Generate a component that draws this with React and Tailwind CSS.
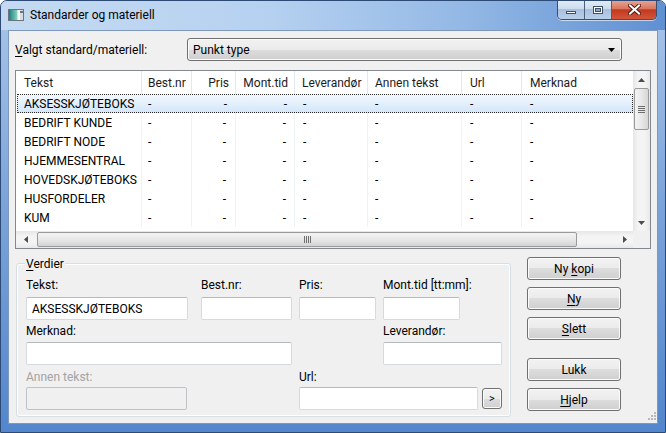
import React from "react";

const columns = [
  { label: "Tekst", cls: "w-[126px] pl-[8px]", val: "w-[126px] pl-[8px]" },
  { label: "Best.nr", cls: "w-[50px] pl-[6px]", val: "w-[50px] pl-[6px]" },
  { label: "Pris", cls: "w-[44px] justify-end pr-[6px]", val: "w-[44px] justify-end pr-[9px]" },
  { label: "Mont.tid", cls: "w-[59px] justify-end pr-[6px]", val: "w-[59px] justify-end pr-[8px]" },
  { label: "Leverandør", cls: "w-[73px] pl-[7px]", val: "w-[73px] pl-[8px]" },
  { label: "Annen tekst", cls: "w-[94px] pl-[7px]", val: "w-[94px] pl-[7px]" },
  { label: "Url", cls: "w-[60px] pl-[8px]", val: "w-[60px] pl-[8px]" },
  { label: "Merknad", cls: "w-[130px] pl-[8px]", val: "w-[130px] pl-[8px]" },
];

const rows = [
  "AKSESSKJØTEBOKS",
  "BEDRIFT KUNDE",
  "BEDRIFT NODE",
  "HJEMMESENTRAL",
  "HOVEDSKJØTEBOKS",
  "HUSFORDELER",
  "KUM",
];

function U({ children }) {
  return <span className="underline underline-offset-[2px]">{children}</span>;
}

function WinButton({ children, className = "" }) {
  return (
    <button
      className={`h-[23px] w-[94px] rounded-[3px] border border-[#707070] bg-[linear-gradient(#f2f2f2_0%,#ebebeb_50%,#dddddd_50%,#cfcfcf_100%)] shadow-[inset_0_0_0_1px_#fbfbfb] text-[12px] leading-none text-black flex items-center justify-center ${className}`}
    >
      {children}
    </button>
  );
}

function TextBox({ className = "", value = "", disabled = false }) {
  return (
    <div
      className={`h-[23px] rounded-[2px] border ${
        disabled
          ? "border-[#bfc3c8] bg-[#f0f0f0]"
          : "border-[#d5dae1] border-t-[#b5bac2] bg-white"
      } flex items-center pl-[5px] text-[12px] ${className}`}
    >
      {value}
    </div>
  );
}

function Field({ label, className = "", children, disabled = false }) {
  return (
    <div className={`flex flex-col ${className}`}>
      <div
        className={`h-[16px] leading-[16px] text-[12px] ${
          disabled ? "text-[#a3a3a3]" : "text-black"
        }`}
      >
        {label}
      </div>
      {children}
    </div>
  );
}

function TitleIcon() {
  return (
    <svg width="16" height="16" viewBox="0 0 16 16">
      <defs>
        <linearGradient id="ti" x1="0" y1="0" x2="1" y2="0">
          <stop offset="0" stopColor="#1f7f86" />
          <stop offset="1" stopColor="#7fd3b8" />
        </linearGradient>
      </defs>
      <rect x="0.5" y="2.5" width="15" height="11" fill="#d9dde2" stroke="#6b737c" />
      <rect x="1" y="3" width="8" height="10" fill="url(#ti)" />
      <rect x="10" y="3" width="2" height="10" fill="#f4f6f8" />
      <rect x="12" y="4" width="3" height="2" fill="#6b737c" />
    </svg>
  );
}

function CaptionButtons() {
  return (
    <div className="ml-auto mr-[8px] -mt-px flex h-[20px] overflow-hidden rounded-b-[5px] border border-t-0 border-[#3b4e6b] shadow-[0_1px_0_rgba(255,255,255,0.6)]">
      <div className="w-[27px] h-full bg-[linear-gradient(#e4edf7_0%,#cddcee_45%,#a9c0df_50%,#b9cfe9_100%)] border-r border-[#4b5f7c] flex items-end justify-center pb-[5px]">
        <div className="w-[10px] h-[3px] bg-white border border-[#3f4f66]" />
      </div>
      <div className="w-[27px] h-full bg-[linear-gradient(#e4edf7_0%,#cddcee_45%,#a9c0df_50%,#b9cfe9_100%)] border-r border-[#4b5f7c] flex items-center justify-center">
        <div className="w-[10px] h-[8px] border border-[#3f4f66] bg-white p-[1px]">
          <div className="w-full h-full bg-[#8fa7c8] border border-[#3f4f66]" />
        </div>
      </div>
      <div className="w-[44px] h-full bg-[linear-gradient(#eaa898_0%,#d8775f_45%,#c2391e_52%,#d2563a_100%)] flex items-center justify-center">
        <svg width="13" height="11" viewBox="0 0 13 11">
          <path d="M2 1.5 L11 9.5 M11 1.5 L2 9.5" stroke="#5a1a10" strokeWidth="4" strokeLinecap="square" />
          <path d="M2 1.5 L11 9.5 M11 1.5 L2 9.5" stroke="#ffffff" strokeWidth="2" strokeLinecap="square" />
        </svg>
      </div>
    </div>
  );
}

function Tri({ dir }) {
  const d = {
    up: "M0 4 L3.5 0 L7 4 Z",
    down: "M0 0 L7 0 L3.5 4 Z",
    left: "M4 0 L4 7 L0 3.5 Z",
    right: "M0 0 L4 3.5 L0 7 Z",
  }[dir];
  const horiz = dir === "left" || dir === "right";
  return (
    <svg width={horiz ? 4 : 7} height={horiz ? 7 : 4} viewBox={horiz ? "0 0 4 7" : "0 0 7 4"}>
      <path d={d} fill="#4d4d4d" />
    </svg>
  );
}

function ListView() {
  return (
    <div className="ml-[6px] mt-[9px] w-[636px] h-[179px] border border-[#828790] bg-white flex flex-col text-[12px]">
      <div className="flex h-[160px]">
        {/* list content */}
        <div className="w-[617px] h-full overflow-hidden">
          <div className="flex h-[23px] bg-white">
            {columns.map((c) => (
              <div
                key={c.label}
                className={`${c.cls} shrink-0 h-full flex items-center pt-[1px] border-r border-[#e3e8ee] text-[#1b1b1b] whitespace-nowrap`}
              >
                {c.label}
              </div>
            ))}
          </div>
          {rows.map((r, i) => (
            <div
              key={r}
              className={`flex h-[19px] w-[616px] ${
                i === 0
                  ? "bg-[linear-gradient(#f3f8fe,#d3e6fa)] outline-1 outline-dotted outline-[#2a2a2a] -outline-offset-1 ml-px"
                  : ""
              }`}
            >
              {columns.map((c, j) => (
                <div
                  key={c.label}
                  className={`${c.val} shrink-0 h-full flex items-center pt-[1px] whitespace-nowrap ${
                    i === 0 ? "" : "border-r border-[#eef3fa]"
                  } ${i === 0 && j === 0 ? "-ml-px" : ""}`}
                >
                  {j === 0 ? r : "-"}
                </div>
              ))}
            </div>
          ))}
        </div>
        {/* vertical scrollbar */}
        <div className="w-[17px] h-full bg-[linear-gradient(90deg,#e6e6e6,#f4f4f4_30%,#f4f4f4_70%,#e8e8e8)] flex flex-col items-center">
          <div className="h-[17px] w-full flex items-center justify-center">
            <Tri dir="up" />
          </div>
          <div className="w-[15px] h-[42px] rounded-[2px] border border-[#9a9a9a] bg-[linear-gradient(90deg,#f3f3f3,#e8e8e8_50%,#d6d6d6)] flex flex-col items-center justify-center gap-[1px]">
            <div className="w-[7px] h-[1px] bg-[#6e6e6e]" />
            <div className="w-[7px] h-[1px] bg-[#6e6e6e]" />
            <div className="w-[7px] h-[1px] bg-[#6e6e6e]" />
            <div className="w-[7px] h-[1px] bg-[#6e6e6e]" />
          </div>
          <div className="flex-1" />
          <div className="h-[17px] w-full flex items-center justify-center">
            <Tri dir="down" />
          </div>
        </div>
      </div>
      {/* horizontal scrollbar */}
      <div className="flex h-[17px]">
        <div className="w-[617px] h-full bg-[linear-gradient(#e6e6e6,#f4f4f4_30%,#f4f4f4_70%,#e8e8e8)] flex items-center">
          <div className="w-[20px] h-full flex items-center justify-center">
            <Tri dir="left" />
          </div>
          <div className="ml-[1px] w-[540px] h-[15px] rounded-[2px] border border-[#9a9a9a] bg-[linear-gradient(#f3f3f3,#e8e8e8_50%,#d3d3d3)] flex items-center justify-center gap-[1px]">
            <div className="w-[1px] h-[7px] bg-[#6e6e6e]" />
            <div className="w-[1px] h-[7px] bg-[#6e6e6e]" />
            <div className="w-[1px] h-[7px] bg-[#6e6e6e]" />
            <div className="w-[1px] h-[7px] bg-[#6e6e6e]" />
          </div>
          <div className="flex-1" />
          <div className="w-[17px] h-full flex items-center justify-center">
            <Tri dir="right" />
          </div>
        </div>
        <div className="w-[17px] h-full bg-[#f0f0f0]" />
      </div>
    </div>
  );
}

export default function App() {
  return (
    <div className="w-[666px] h-[433px] overflow-hidden rounded-t-[7px] border border-[#2d4a75] bg-[linear-gradient(180deg,#a9c6ea_0%,#7ea5da_45%,#5386cc_100%)] flex flex-col [font-family:Roboto,'Noto_Sans',sans-serif] text-black">
      {/* Title bar */}
      <div className="h-[29px] shrink-0 flex items-start bg-[linear-gradient(90deg,#c4daf2_0%,#b6d1f0_40%,#93b8e5_70%,#5f90d2_100%)]">
        <div className="ml-[7px] mt-[6px]">
          <TitleIcon />
        </div>
        <div className="ml-[6px] mt-[6px] text-[12px] leading-[16px] text-black">
          Standarder og materiell
        </div>
        <CaptionButtons />
      </div>

      {/* Client area */}
      <div className="relative mx-[7px] mb-[8px] flex-1 border border-[#7d97bd] bg-[#f0f0f0] flex flex-col">
        {/* Selector row */}
        <div className="flex items-center pt-[7px]">
          <div className="w-[178px] pl-[6px] text-[12px]">
            <U>V</U>algt standard/materiell:
          </div>
          <div className="w-[435px] h-[23px] rounded-[3px] border border-[#707070] bg-[linear-gradient(#f2f2f2_0%,#ebebeb_50%,#dddddd_50%,#cfcfcf_100%)] shadow-[inset_0_0_0_1px_#fbfbfb] flex items-center pl-[5px] pr-[6px] text-[12px]">
            <span className="flex-1">Punkt type</span>
            <svg width="7" height="4" viewBox="0 0 7 4">
              <path d="M0 0 L7 0 L3.5 4 Z" fill="#000" />
            </svg>
          </div>
        </div>

        <ListView />

        {/* Bottom section */}
        <div className="flex mt-[8px]">
          <div className="relative ml-[7px] mt-[6px] w-[495px] h-[154px] rounded-[3px] border border-[#d5dfe5] shadow-[inset_0_0_0_1px_#ffffff] pl-[9px] pt-[13px]">
            <div className="absolute left-[8px] -top-[8px] px-px bg-[#f0f0f0] text-[12px] leading-[16px]">
              <U>V</U>erdier
            </div>
            <div className="flex">
              <Field label="Tekst:" className="w-[162px]">
                <TextBox value="AKSESSKJØTEBOKS" className="mt-[4px]" />
              </Field>
              <Field label="Best.nr:" className="ml-[13px] w-[91px]">
                <TextBox className="mt-[4px]" />
              </Field>
              <Field label="Pris:" className="ml-[7px] w-[77px]">
                <TextBox className="mt-[4px]" />
              </Field>
              <Field label="Mont.tid [tt:mm]:" className="ml-[7px] w-[77px] whitespace-nowrap">
                <TextBox className="mt-[4px]" />
              </Field>
            </div>
            <div className="flex mt-[3px]">
              <Field label="Merknad:" className="w-[266px]">
                <TextBox className="mt-[3px]" />
              </Field>
              <Field label="Leverandør:" className="ml-[91px] w-[119px]">
                <TextBox className="mt-[3px]" />
              </Field>
            </div>
            <div className="flex mt-[4px]">
              <Field label="Annen tekst:" className="w-[161px]" disabled>
                <TextBox className="mt-[2px]" disabled />
              </Field>
              <Field label="Url:" className="ml-[112px] w-[203px]">
                <div className="mt-[2px] flex items-center">
                  <TextBox className="w-[179px]" />
                  <button className="ml-[4px] w-[20px] h-[21px] rounded-[3px] border border-[#707070] bg-[linear-gradient(#f2f2f2_0%,#ebebeb_50%,#dddddd_50%,#cfcfcf_100%)] shadow-[inset_0_0_0_1px_#fbfbfb] text-[11px] leading-none flex items-center justify-center">
                    &gt;
                  </button>
                </div>
              </Field>
            </div>
          </div>

          <div className="ml-[16px] flex flex-col">
            <WinButton>
              Ny&nbsp;<U>k</U>opi
            </WinButton>
            <WinButton className="mt-[7px]">
              <U>N</U>y
            </WinButton>
            <WinButton className="mt-[7px]">
              <U>S</U>lett
            </WinButton>
            <WinButton className="mt-[18px]">Lukk</WinButton>
            <WinButton className="mt-[7px]">
              <U>H</U>jelp
            </WinButton>
          </div>
        </div>

        {/* resize grip */}
        <svg className="absolute right-[1px] bottom-[1px]" width="11" height="11" viewBox="0 0 11 11">
          <g fill="#b8b8b8">
            <rect x="9" y="1" width="2" height="2" />
            <rect x="6" y="4" width="2" height="2" />
            <rect x="9" y="4" width="2" height="2" />
            <rect x="3" y="7" width="2" height="2" />
            <rect x="6" y="7" width="2" height="2" />
            <rect x="9" y="7" width="2" height="2" />
          </g>
        </svg>
      </div>
    </div>
  );
}
